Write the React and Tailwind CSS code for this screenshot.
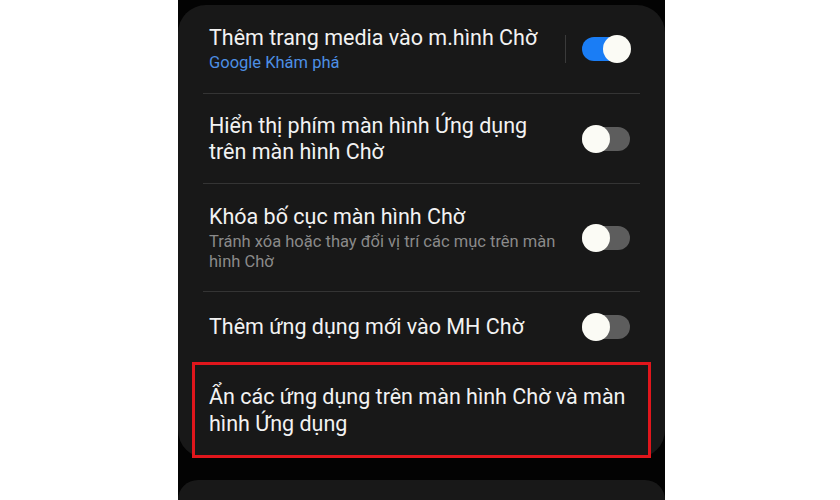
import { useState } from "react";

const rows = [
  {
    title: "Thêm trang media vào m.hình Chờ",
    sub: "Google Khám phá",
    subTone: "link",
    on: true,
    divider: true,
    h: "h-[89px]",
  },
  {
    title: "Hiển thị phím màn hình Ứng dụng trên màn hình Chờ",
    on: false,
    h: "h-[90px]",
  },
  {
    title: "Khóa bố cục màn hình Chờ",
    sub: "Tránh xóa hoặc thay đổi vị trí các mục trên màn hình Chờ",
    on: false,
    h: "h-[108px]",
  },
  {
    title: "Thêm ứng dụng mới vào MH Chờ",
    on: false,
    h: "h-[70px]",
    last: true,
  },
];

function Toggle({ on }) {
  return (
    <div className="relative w-[50px] h-[28px] flex items-center">
      <div
        className={`w-[48px] h-[24px] rounded-full ${
          on ? "bg-[#1a7df5]" : "bg-[#5d5d5d]"
        }`}
      />
      <div
        className={`absolute top-[0px] w-[28px] h-[28px] rounded-full bg-[#fbfbf5] ${
          on ? "left-[21px]" : "left-[0px]"
        }`}
      />
    </div>
  );
}

function SettingRow({ row }) {
  const [on, setOn] = useState(row.on);
  return (
    <div
      className={`flex items-center ${row.h} ${
        row.last ? "" : "border-b border-[#343434]"
      }`}
    >
      <div className="flex-1 pl-[6px] pr-4">
        <div className="text-[21.5px] leading-[26px] text-[#f2f2f2] max-w-[355px]">
          {row.title}
        </div>
        {row.sub && (
          <div
            className={`mt-[2px] text-[16.5px] leading-[20px] max-w-[355px] ${
              row.subTone === "link" ? "text-[#4d8fe4]" : "text-[#8a8a8a]"
            }`}
          >
            {row.sub}
          </div>
        )}
      </div>
      {row.divider && <div className="w-px h-[28px] bg-[#3a3a3a] mr-[16px]" />}
      <button onClick={() => setOn(!on)} className="mr-[8px]">
        <Toggle on={on} />
      </button>
    </div>
  );
}

export default function App() {
  return (
    <div
      className="w-[840px] h-[500px] bg-white flex justify-center overflow-hidden"
      style={{ fontFamily: "Roboto, 'Noto Sans', sans-serif" }}
    >
      <div className="w-[487px] ml-[3px] bg-[#030303] pt-[5px] flex flex-col gap-[22px]">
        <section className="rounded-[28px] bg-[#181818] px-[25px]">
          {rows.map((row) => (
            <SettingRow key={row.title} row={row} />
          ))}
          <div className="-mx-[11px] h-[96px] border-[3px] border-[#e0161c] flex items-center pl-[14px] pr-2">
            <div className="text-[21.5px] leading-[27px] text-[#f2f2f2]">
              Ẩn các ứng dụng trên màn hình Chờ và màn hình Ứng dụng
            </div>
          </div>
        </section>
        <section className="rounded-t-[28px] bg-[#181818] h-[60px]" />
      </div>
    </div>
  );
}
